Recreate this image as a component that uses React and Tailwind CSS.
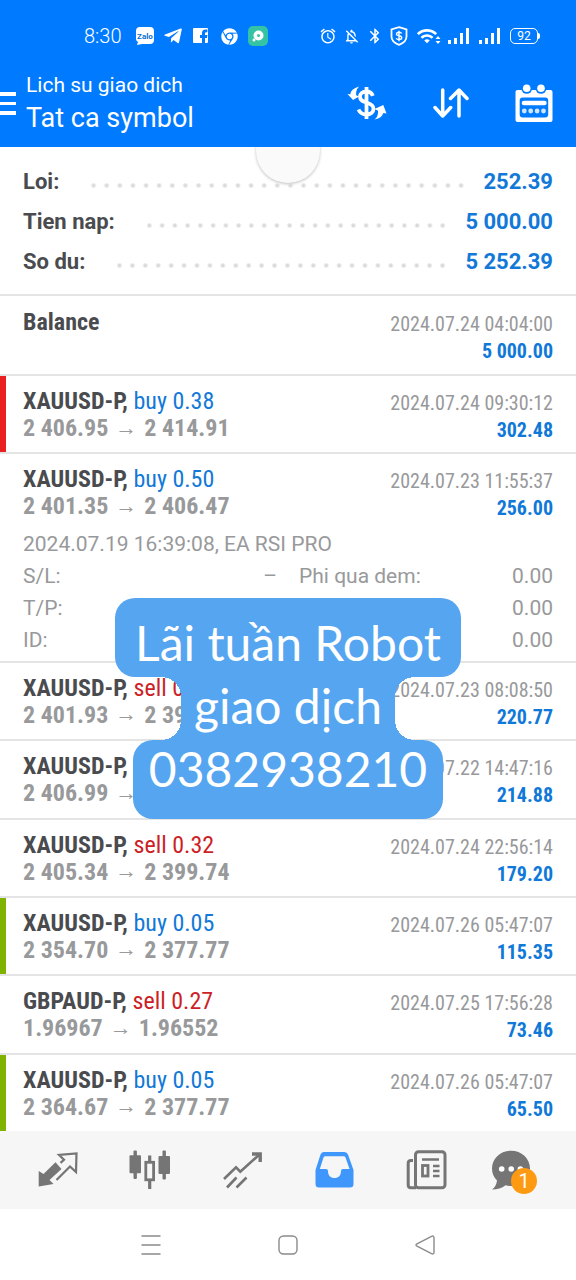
import React from "react";
import { FaChrome, FaTelegramPlane } from "react-icons/fa";
import { MdAlarm, MdOutlineNotificationsOff, MdBluetooth, MdWifi } from "react-icons/md";

const DEALS = [
    { symbol: "XAUUSD-P", side: "buy", lots: "0.38", open: "2 406.95", close: "2 414.91", time: "2024.07.24 09:30:12", profit: "302.48", mark: "sl" },
    {
        symbol: "XAUUSD-P", side: "buy", lots: "0.50", open: "2 401.35", close: "2 406.47", time: "2024.07.23 11:55:37", profit: "256.00",
        details: {
            note: "2024.07.19 16:39:08, EA RSI PRO",
            rows: [
                ["S/L:", "–", "Phi qua dem:", "0.00"],
                ["T/P:", "", "", "0.00"],
                ["ID:", "", "", "0.00"],
            ],
        },
    },
    { symbol: "XAUUSD-P", side: "sell", lots: "0.40", open: "2 401.93", close: "2 396.41", time: "2024.07.23 08:08:50", profit: "220.77" },
    { symbol: "XAUUSD-P", side: "sell", lots: "0.35", open: "2 406.99", close: "2 400.85", time: "2024.07.22 14:47:16", profit: "214.88" },
    { symbol: "XAUUSD-P", side: "sell", lots: "0.32", open: "2 405.34", close: "2 399.74", time: "2024.07.24 22:56:14", profit: "179.20" },
    { symbol: "XAUUSD-P", side: "buy", lots: "0.05", open: "2 354.70", close: "2 377.77", time: "2024.07.26 05:47:07", profit: "115.35", mark: "tp" },
    { symbol: "GBPAUD-P", side: "sell", lots: "0.27", open: "1.96967", close: "1.96552", time: "2024.07.25 17:56:28", profit: "73.46" },
    { symbol: "XAUUSD-P", side: "buy", lots: "0.05", open: "2 364.67", close: "2 377.77", time: "2024.07.26 05:47:07", profit: "65.50", mark: "tp" },
];

const TOTALS = [
    ["Loi:", "252.39"],
    ["Tien nap:", "5 000.00"],
    ["So du:", "5 252.39"],
];

// --- Status bar ---
const Signal = () => (
    <svg width="22" height="18" viewBox="0 0 22 18" fill="white">
        <rect x="0" y="13" width="3" height="4" />
        <rect x="6" y="11" width="3" height="6" />
        <rect x="12" y="6" width="3" height="11" />
        <rect x="18" y="1" width="3" height="16" />
    </svg>
);

const StatusBar = () => (
    <div className="flex h-[72px] items-center justify-between pr-[36px] pl-[84px] text-white">
        <div className="flex items-center gap-2">
            <span className="mr-[6px] text-[20px] leading-6 font-light">8:30</span>
            <svg width="20" height="20" viewBox="0 0 20 20">
                <path d="M5 1h10q4 0 4 4v9q0 4-4 4H7l-5 1 1-3q-2-1-2-3V5q0-4 4-4z" fill="white" />
                <text x="10" y="12.5" textAnchor="middle" fontSize="8" fontWeight="700" fill="#0a6fd0" fontFamily="Roboto, sans-serif">Zalo</text>
            </svg>
            <FaTelegramPlane size={20} />
            <svg width="20" height="20" viewBox="0 0 20 20">
                <path fill="white" fillRule="evenodd" d="M3 2h13q1 0 1 1v13q0 1-1 1h-2v-5h2l.4-3H14V7.500q0-1.300 1.400-1.300h1V3.500h-2q-3.400 0-3.400 3.500v2H9v3h2v5H3q-1 0-1-1V3q0-1 1-1z" />
            </svg>
            <FaChrome size={17} className="mx-[2px]" />
            <svg width="20" height="20" viewBox="0 0 20 20">
                <rect width="20" height="20" rx="5" fill="#34c3a5" />
                <circle cx="10.500" cy="9.500" r="5" fill="white" />
                <circle cx="6" cy="14" r="1.500" fill="white" />
                <circle cx="10.500" cy="9.500" r="1.500" fill="#34c3a5" />
            </svg>
        </div>
        <div className="flex items-center gap-[6px]">
            <MdAlarm size={18} />
            <MdOutlineNotificationsOff size={17} />
            <MdBluetooth size={18} />
            <svg width="18" height="20" viewBox="0 0 18 20" fill="none" stroke="white" strokeWidth="1.800">
                <path d="M9 1.200 16.500 3.500v7Q16.500 16 9 18.800 1.500 16 1.500 10.500v-7z" />
                <path d="M11.700 7.500Q11 6.300 9 6.300 6.500 6.300 6.500 8.100 6.500 9.500 9 9.800 11.700 10.200 11.700 11.800 11.700 13.600 9 13.600 6.800 13.600 6.200 12.200M9 4.800v10.400" strokeWidth="1.400" />
            </svg>
            <span className="relative mr-1 ml-[2px]">
                <MdWifi size={22} />
                <svg className="absolute -right-[3px] bottom-[3px]" width="6" height="8" viewBox="0 0 6 8" fill="white">
                    <path d="M3 0l2.500 3h-5zM3 8l2.500-3h-5z" />
                </svg>
            </span>
            <Signal />
            <span className="ml-[3px]"><Signal /></span>
            <span className="ml-[3px] flex items-center">
                <span className="flex h-[16px] w-[28px] items-center justify-center rounded-[5px] border border-white text-[12px] leading-3">92</span>
                <span className="h-[6px] w-[2px] rounded-r-sm bg-white" />
            </span>
        </div>
    </div>
);

// --- Header icons ---
const CurrencyIcon = () => (
    <svg width="40" height="34" viewBox="0 0 40 34">
        <path d="M25.800 9.800C24.800 6.800 22.500 5.500 19.500 5.500 15.500 5.500 13 7.500 13 10.700c0 3.800 3.300 4.800 6.500 5.800 3.500 1 7 2.300 7 6.300 0 3.700-3 5.700-7 5.700-3.700 0-6.500-1.700-8-5M19.500 1v32" fill="none" stroke="white" strokeWidth="3.800" />
        <path d="M.5 8 6 14 12 10.500l-2.800-1.300Q8.500 4.500 12 .5 3.500 3 3.500 8.200zM27.500 23l8.800-4L39.500 27.500l-3-.6Q34 32.500 27.500 33.500q4-3 3.600-8.800z" fill="white" />
    </svg>
);

const SortIcon = () => (
    <svg width="36" height="30" viewBox="0 0 36 30" fill="none" stroke="white" strokeWidth="3.500" strokeLinecap="round" strokeLinejoin="round">
        <path d="M9.700 2v26M2 19.500l7.700 8.500 8-8.500M26 28V2M17.500 10.500 26 2l8 8.500" />
    </svg>
);

const CalendarIcon = () => (
    <svg width="38" height="38" viewBox="0 0 38 38">
        <rect x=".5" y="6" width="37" height="32" rx="2" fill="white" />
        <rect x="4.700" y="13.500" width="28.500" height="20" rx="3" fill="#007aff" />
        <rect x="6.700" y="16.700" width="25" height="4.600" rx="2.300" fill="white" />
        <circle cx="11.700" cy="4.300" r="5.500" fill="#007aff" />
        <circle cx="26" cy="4.300" r="5.500" fill="#007aff" />
        <circle cx="11.700" cy="4.300" r="3.800" fill="white" />
        <circle cx="26" cy="4.300" r="3.800" fill="white" />
        {[9.3, 15.7, 22.1, 28.5].map((x) => (
            <circle key={x} cx={x} cy="27" r="2.400" fill="#cfe6ff" />
        ))}
    </svg>
);

const TitleBar = () => (
    <div className="flex h-[75px] items-start">
        <button aria-label="Menu" className="mt-[20px] flex w-[16px] flex-col gap-[6px]">
            <span className="h-[4px] w-full bg-white" />
            <span className="h-[3px] w-full bg-white" />
            <span className="h-[4px] w-full bg-white" />
        </button>
        <div className="ml-[10px] flex-1 text-white">
            <p className="text-[21px] leading-[26px]">Lich su giao dich</p>
            <h1 className="text-[27px] leading-10">Tat ca symbol</h1>
        </div>
        <div className="flex h-[62px] items-center gap-[46px] pr-[23px]">
            <button aria-label="Currency"><CurrencyIcon /></button>
            <button aria-label="Sort"><SortIcon /></button>
            <button aria-label="Period"><CalendarIcon /></button>
        </div>
    </div>
);

// --- Totals with dot leaders ---
const Totals = () => (
    <dl className="border-b-2 border-[#e4e4e4] px-[23px] pt-[15px] pb-[12px] text-[22px] leading-10 font-bold">
        {TOTALS.map(([label, value]) => (
            <div key={label} className="flex items-center">
                <dt>{label}</dt>
                <span className="mt-[6px] mr-4 ml-[28px] h-[5px] flex-1 bg-[radial-gradient(circle,#d9d9d9_1px,transparent_3px)] bg-[length:13px_5px] [background-repeat:round_no-repeat]" />
                <dd className="text-[#1279d8]">{value}</dd>
            </div>
        ))}
    </dl>
);

// --- Deal list ---
const Stamp = ({ time, amount }) => (
    <div className="pt-[2px] text-right text-[20px] leading-[27px]">
        <p className="text-[#98999b]">{time}</p>
        <p className="font-bold text-[#0f78d8]">{amount}</p>
    </div>
);

const Deal = ({ deal }) => (
    <li className={`relative grow border-b-2 border-[#e4e4e4] px-[23px] pt-[12px] last:border-0 ${deal.details ? "pb-[4px]" : "pb-[8px]"}`}>
        {deal.mark && (
            <span className={`absolute inset-y-0 left-0 w-[6px] ${deal.mark === "sl" ? "bg-[#e8201f]" : "bg-[#7fb300]"}`} />
        )}
        <div className="flex justify-between font-['Roboto_Condensed',Roboto,sans-serif] whitespace-nowrap">
            <div className="text-[24px] leading-[27px]">
                <p>
                    <b className="font-bold">{deal.symbol},</b>{" "}
                    <span className={deal.side === "buy" ? "text-[#1279d8]" : "text-[#cc1f26]"}>{deal.side} {deal.lots}</span>
                </p>
                <p className="flex h-[27px] items-center gap-[7px] font-bold text-[#98999b]">
                    {deal.open}
                    <span className="pb-[2px] font-['Liberation_Sans',sans-serif] text-[22px] leading-none font-normal">→</span>
                    {deal.close}
                </p>
            </div>
            <Stamp time={deal.time} amount={deal.profit} />
        </div>
        {deal.details && (
            <div className="pt-[6px] text-[21px] leading-8 text-[#98999b]">
                <p>{deal.details.note}</p>
                {deal.details.rows.map(([name, value, fee, amount]) => (
                    <div key={name} className="grid grid-cols-2 gap-[22px]">
                        <p className="flex justify-between"><span>{name}</span><span>{value}</span></p>
                        <p className="flex justify-between"><span>{fee}</span><span>{amount}</span></p>
                    </div>
                ))}
            </div>
        )}
    </li>
);

// --- Caption laid over the list ---
const Caption = () => (
    <div className="absolute top-[598px] left-1/2 flex -translate-x-1/2 flex-col items-center text-center font-[Lato,sans-serif] text-[48px] leading-[57px] whitespace-nowrap text-white">
        <p className="w-[346px] rounded-[20px] bg-[#55a5f1] pt-4 pb-[6px]">Lãi tuần Robot</p>
        <p className="relative w-[214px] bg-[#55a5f1] pb-[6px]">
            giao dịch
            <span className="absolute top-0 right-full size-5 bg-[radial-gradient(circle_at_0_100%,transparent_20px,#55a5f1_20px)]" />
            <span className="absolute right-full bottom-0 size-5 bg-[radial-gradient(circle_at_0_0,transparent_20px,#55a5f1_20px)]" />
            <span className="absolute top-0 left-full size-5 bg-[radial-gradient(circle_at_100%_100%,transparent_20px,#55a5f1_20px)]" />
            <span className="absolute bottom-0 left-full size-5 bg-[radial-gradient(circle_at_100%_0,transparent_20px,#55a5f1_20px)]" />
        </p>
        <p className="w-[310px] rounded-[20px] bg-[#55a5f1] pb-[22px]">0382938210</p>
    </div>
);

// --- Bottom tabs ---
const QuotesIcon = () => (
    <svg width="40" height="36" viewBox="0 0 40 36">
        <path d="M.7 19v15.500L15.500 32l-4-4L23.500 17l-6-6.800L5.500 22z" fill="#757575" />
        <path d="M18.500 28 32 14.500l6 5.500.5-18.500L21 3l5 4.800-3.500 3" fill="none" stroke="#757575" strokeWidth="2.200" />
    </svg>
);

const ChartIcon = () => (
    <svg width="42" height="40" viewBox="0 0 42 40" fill="#757575">
        <rect x=".5" y="5.300" width="11.500" height="18" rx="1" />
        <rect x="4.500" y=".5" width="3.400" height="28.500" rx="1" />
        <rect x="29.500" y="6" width="11.500" height="18" rx="1" />
        <rect x="33.500" y=".5" width="3.400" height="29" rx="1" />
        <path d="M20.700 5.500v5.500M20.700 31v8" stroke="#757575" strokeWidth="3.200" />
        <rect x="16.800" y="12.300" width="7.800" height="17.500" fill="none" stroke="#757575" strokeWidth="2.800" />
    </svg>
);

const TradeIcon = () => (
    <svg width="39" height="37" viewBox="0 0 39 37" fill="none" stroke="#757575" strokeWidth="2.600">
        <path d="M1 27 13 15.300l4.300 4.400L37 2M4 35.500l9.500-10M13.500 35.500l10-10" />
        <path d="M29 2h8.200v8" strokeWidth="3.400" />
    </svg>
);

const HistoryIcon = () => (
    <svg width="39" height="36" viewBox="0 0 39 36">
        <path fill="#3f97fb" fillRule="evenodd" d="M8.500 0h21Q32 0 33 2.500L38.500 18v14q0 3.500-3.500 3.500H4Q.5 35.500.5 32V18L5.500 2.500Q6.500 0 8.500 0zM10.500 4.300Q9 4.300 8.500 5.500L4.800 17H11q2 0 2 2c0 4.500 2.500 7 6.500 7s6.500-2.500 6.500-7q0-2 2-2h6.500L30.500 5.500Q30 4.300 28.500 4.300z" />
    </svg>
);

const NewsIcon = () => (
    <svg width="41" height="40" viewBox="0 0 41 40" fill="none" stroke="#757575" strokeWidth="3">
        <rect x="9.500" y="1.700" width="29.500" height="36" rx="3" />
        <path d="M7 10.500H5Q2.200 10.500 2.200 13v22Q2.200 37.700 5 37.700h5" />
        <path d="M16 9.500h17M27 16h6.500M27 21h6.500M27 26h6.500" strokeWidth="2.600" />
        <rect x="16.500" y="15.500" width="5.500" height="10.500" strokeWidth="2.800" />
    </svg>
);

const ChatIcon = () => (
    <svg width="40" height="40" viewBox="0 0 40 40">
        <path d="M20 .8C30.500.8 39 8.500 39 18.500S30.500 36 20 36q-3 0-5.500-.8Q9 39.500 1 39.600 5.500 36 6 30.500 1 25.500 1 18.500C1 8.500 9.500.8 20 .8z" fill="#757575" />
        {[10.7, 20.2, 29.4].map((x) => (
            <circle key={x} cx={x} cy="19" r="2.800" fill="white" />
        ))}
    </svg>
);

const Tabs = () => (
    <nav className="grid h-[78px] grid-cols-6 bg-[#f6f6f6] px-3 *:flex *:items-center *:justify-center">
        <button aria-label="Quotes"><QuotesIcon /></button>
        <button aria-label="Chart"><ChartIcon /></button>
        <button aria-label="Trade"><TradeIcon /></button>
        <button aria-label="History"><HistoryIcon /></button>
        <button aria-label="News"><NewsIcon /></button>
        <button aria-label="Messages">
            <span className="relative mr-[14px]">
                <ChatIcon />
                <span className="absolute -right-[6px] -bottom-[4px] flex size-[26px] items-center justify-center rounded-full bg-[#fd9a12] text-[20px] leading-none text-white">1</span>
            </span>
        </button>
    </nav>
);

const SystemNav = () => (
    <div className="flex h-[71px] items-center justify-center gap-[117px]">
        <button aria-label="Recent apps">
            <svg width="20" height="20" viewBox="0 0 20 20" stroke="#8a8a8a" strokeWidth="1.300">
                <path d="M.5 1h19M.5 10h19M.5 19h19" />
            </svg>
        </button>
        <button aria-label="Home">
            <svg width="20" height="20" viewBox="0 0 20 20" fill="none" stroke="#8a8a8a" strokeWidth="1.400">
                <rect x="1" y="1" width="18" height="18" rx="4.500" />
            </svg>
        </button>
        <button aria-label="Back">
            <svg width="20" height="20" viewBox="0 0 20 20" fill="none" stroke="#8a8a8a" strokeWidth="1.400">
                <path d="M2 8.800 16.500 1.300Q19 .3 19 3v14q0 2.700-2.500 1.700L2 11.200Q0 10 2 8.800z" />
            </svg>
        </button>
    </div>
);

export default function App() {
    return (
        <div className="relative flex min-h-screen flex-col bg-white font-[Roboto,sans-serif] text-[#4a4b4e]">
            <header className="bg-[#007aff]">
                <StatusBar />
                <TitleBar />
            </header>
            <main className="relative flex grow flex-col overflow-hidden">
                <div className="absolute -top-7 left-1/2 size-16 -translate-x-1/2 rounded-full bg-[#fafafa] shadow-[0_1px_3px_rgba(0,0,0,0.25)]" />
                <div className="relative"><Totals /></div>
                <ul className="flex grow flex-col">
                    <li className="flex h-20 justify-between border-b-2 border-[#e4e4e4] px-[23px] pt-[13px] font-['Roboto_Condensed',Roboto,sans-serif]">
                        <b className="text-[24px] leading-[27px]">Balance</b>
                        <Stamp time="2024.07.24 04:04:00" amount="5 000.00" />
                    </li>
                    {DEALS.map((deal, i) => (
                        <Deal key={i} deal={deal} />
                    ))}
                </ul>
            </main>
            <Tabs />
            <SystemNav />
            <Caption />
        </div>
    );
}
